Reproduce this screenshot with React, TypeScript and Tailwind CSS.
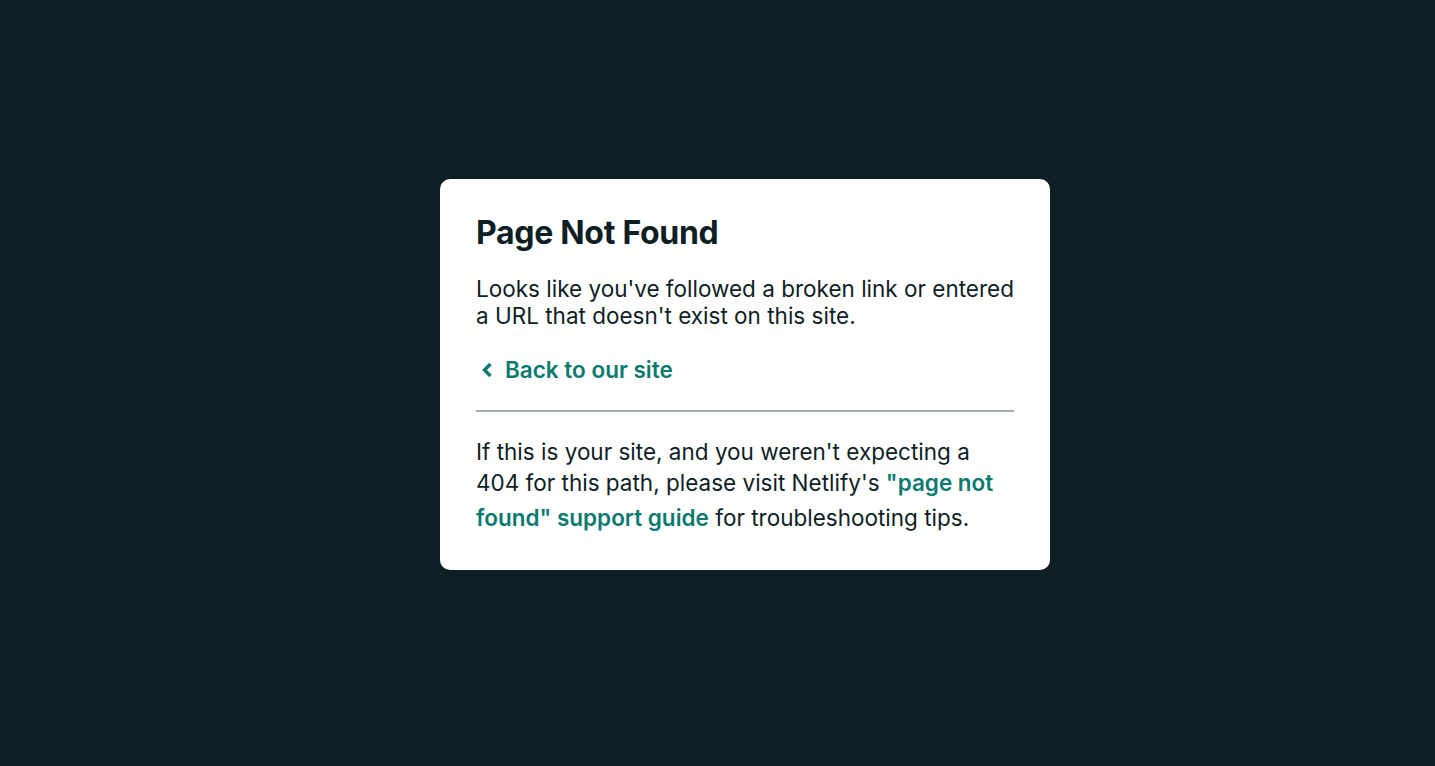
import React from "react";

export default function App() {
  return (
    <div className="w-full h-[766px] bg-[#0e1e25] flex items-start justify-center pt-[179px] pl-[55px]" style={{ fontFamily: "Inter, 'Noto Sans', sans-serif" }}>
      <div className="w-[610px] bg-white rounded-[10px] px-[36px] pt-[34px] pb-[35px] text-[#0e1e25]">
        <h1 className="text-[32px] leading-[40px] font-bold tracking-[-0.3px]">Page Not Found</h1>
        <p className="mt-[22px] text-[22.5px] leading-[27px]">
          Looks like you've followed a broken link or entered a URL that doesn't exist on this site.
        </p>
        <a href="#" className="mt-[26px] flex items-center gap-[10px] text-[22.5px] leading-[30px] font-semibold text-[#0b7a6e]">
          <svg width="16" height="16" viewBox="0 0 16 16" fill="none" className="ml-[3px]">
            <path d="M11.5 2 L5.5 8 L11.5 14" stroke="currentColor" strokeWidth="3.4" />
          </svg>
          Back to our site
        </a>
        <hr className="mt-[25px] border-0 h-[2px] bg-[#a3adad]" />
        <p className="mt-[26px] text-[22.5px] leading-[27px]">
          If this is your site, and you weren't expecting a 404 for this path, please visit Netlify's{" "}
          <a href="#" className="font-semibold text-[#0b7a6e] leading-[35px]">"page not found" support guide</a> for troubleshooting tips.
        </p>
      </div>
    </div>
  );
}
